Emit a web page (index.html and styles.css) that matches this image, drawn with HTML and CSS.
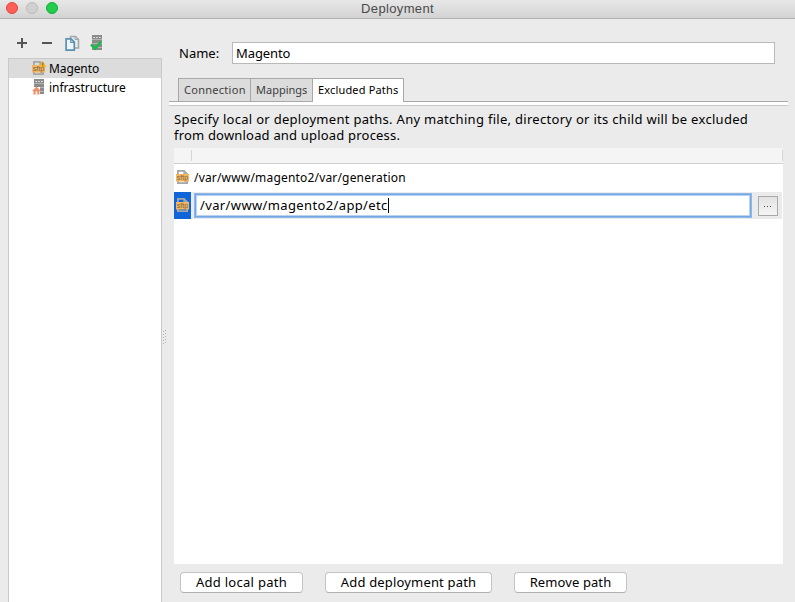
FILE: index.html
```html
<!DOCTYPE html>
<html lang="en">
<head>
<meta charset="utf-8">
<title>Deployment</title>
<link rel="stylesheet" href="styles.css">
</head>
<body>
<svg width="0" height="0" class="defs">
  <defs>
    <symbol id="sftp" viewBox="0 0 13 16" preserveAspectRatio="none">
      <path d="M1.9 5V1.9h6l3 3M1.9 12v2.2h9.2V12" fill="none" stroke="#a6a6a6" stroke-width="1.8"/>
      <path d="M8 1v3.9h4" fill="none" stroke="#a6a6a6" stroke-width="1.3"/>
      <rect x="0" y="5" width="13" height="7.5" fill="#f2b661"/>
      <text x="0.8" y="11" textLength="11.4" lengthAdjust="spacingAndGlyphs" class="glyph">sftp</text>
    </symbol>
    <symbol id="server" viewBox="0 0 12 16">
      <path d="M1 0h10v15H1z" fill="#8b8b8b"/>
      <path d="M1 4.5h10M1 8.5h10M1 12.5h10" stroke="#b4b4b4"/>
      <path d="M2.5 2.5h1.5M5.2 2.5h1.5M8 2.5h1.5" stroke="#eee"/>
    </symbol>
  </defs>
</svg>
<header class="titlebar">
  <div class="lights"><i class="light red"></i><i class="light gray"></i><i class="light green"></i></div>
  <h1><span>Deployment</span></h1>
</header>
<main class="window">
  <aside class="sidebar">
    <div class="tools">
      <svg width="12" height="12"><path d="M6 1v10M1 6h10" stroke="#555" stroke-width="2"/></svg>
      <svg width="12" height="12"><path d="M1 6h10" stroke="#555" stroke-width="2"/></svg>
      <svg class="copy" width="15" height="17" fill="none"><path d="M5.5 3V1.5h5l3 3V13H10" stroke="#a0a8ac" stroke-width="1.6"/><path d="M10 1.5v3h3" stroke="#a0a8ac"/><path d="M1.1 3.9h5l3.2 3.2v8H1.1z" fill="#edf5fa" stroke="#5a91b0" stroke-width="1.7"/><path d="M5.8 4v3.5h3.5" stroke="#5a91b0" stroke-width="1.2"/></svg>
      <svg class="test" width="14" height="16"><use href="#server" x="1" y="0" width="12" height="16"/><path d="M1 9.5l4.2 4.2L11 6.5" fill="none" stroke="#16bd48" stroke-width="2.5"/></svg>
    </div>
    <ul class="servers">
      <li class="selected"><svg width="15" height="16"><use href="#sftp" width="13" height="16"/><path d="M10.8.8l3.7 6.2H7.1z" fill="#f4b62c"/><path d="M10.8 2.5v2.5M10.8 5.6v.9" stroke="#7d5a20" stroke-width="1"/></svg><span>Magento</span></li>
      <li class="infra"><svg width="15" height="16"><use href="#server" x="1" y="0" width="12" height="16"/><path d="M0 8h8v8H0z" fill="#fff"/><path d="M4.5 7.5L0 12h1.4v3.5h6V12H9z" fill="#e9906b"/><path d="M3.6 12.5h1.7v3H3.6z" fill="#fff"/></svg><span>infrastructure</span></li>
    </ul>
  </aside>
  <div class="splitter"><svg width="5" height="16"><path d="M1 2.5h1M3 1.5h1M1 5.5h1M3 4.5h1M1 8.5h1M3 7.5h1M1 11.5h1M3 10.5h1M1 14.5h1M3 13.5h1" stroke="#b0b0b0"/></svg></div>
  <section class="content">
    <div class="name-row"><label><span>Name:</span></label><div class="input"><span>Magento</span></div></div>
    <nav class="tabs">
      <div class="tab connection"><span>Connection</span></div>
      <div class="tab mappings"><span>Mappings</span></div>
      <div class="tab active"><span>Excluded Paths</span></div>
    </nav>
    <div class="strip"></div>
    <p class="hint"><span class="first">Specify local or deployment paths. Any matching file, directory or its child will be excluded</span><span class="second">from download and upload process.</span></p>
    <div class="table">
      <div class="thead"><i></i><b></b></div>
      <div class="row plain"><div class="icon"><svg width="13" height="16"><use href="#sftp" width="13" height="16"/></svg></div><span>/var/www/magento2/var/generation</span></div>
      <div class="row editing"><div class="icon"><svg width="13" height="16"><use href="#sftp" width="13" height="16"/></svg></div><div class="edit"><span>/var/www/magento2/app/etc</span><i class="caret"></i></div><div class="browse"><svg width="10" height="2"><path d="M1 1.5h1M4 1.5h1M7 1.5h1" stroke="#444" stroke-width="1"/></svg></div></div>
    </div>
    <div class="actions">
      <div class="button local"><span>Add local path</span></div>
      <div class="button deploy"><span>Add deployment path</span></div>
      <div class="button remove"><span>Remove path</span></div>
    </div>
  </section>
</main>
</body>
</html>
```
FILE: styles.css
```css
* { box-sizing: border-box; }
body { margin: 0; width: 795px; height: 602px; overflow: hidden; background: #ebebeb; color: #000; font: 13px/16px "Noto Sans", "Open Sans", sans-serif; display: flex; flex-direction: column; }
span { white-space: nowrap; }
svg { flex: none; display: block; }
.defs { position: absolute; }
.glyph { font: 7.5px "Liberation Sans", sans-serif; fill: #7d6344; }
.titlebar { height: 19px; flex: none; display: flex; background: linear-gradient(#e8e8e8, #d3d3d3); border-bottom: 1px solid #b1b1b1; }
.lights { width: 180px; display: flex; gap: 8px; padding: 2px 0 0 6px; }
.light { width: 12px; height: 12px; border-radius: 50%; border: 1px solid; }
.red { background: #ff5f57; border-color: #e2443e; }
.gray { background: #d0d0d0; border-color: #bcbcbc; }
.green { background: #20cd4c; border-color: #14ae38; }
h1 { margin: 0 180px 0 0; flex: 1; text-align: center; font: 13px/17px "Liberation Sans", sans-serif; color: #4a4a4a; letter-spacing: .35px; }
.window { flex: 1; display: flex; min-height: 0; }
.sidebar { width: 154px; margin-left: 8px; display: flex; flex-direction: column; }
.tools { height: 39px; display: flex; align-items: center; padding: 9px 0 0 8px; gap: 13px; }
.copy { margin-left: -1px; }
.test { margin-left: -3px; }
.servers { list-style: none; margin: 0; padding: 0; flex: 1; background: #fff; border: 1px solid #c9c9c9; border-bottom: 0; font-size: 12px; }
.servers li { height: 19px; display: flex; align-items: center; gap: 2px; padding: 0 0 1px 23px; }
.servers span { padding-top: 2px; }
.servers .selected { background: #dcdcdc; letter-spacing: -.1px; }
.servers .infra { letter-spacing: -.06px; }
.splitter { width: 7px; display: flex; align-items: center; padding: 52px 0 0 0; }
.content { flex: 1; display: flex; flex-direction: column; min-width: 0; }
.name-row { margin: 23px 0 0 10px; display: flex; height: 22px; align-items: center; }
.name-row label { width: 53px; }
.input { width: 543px; height: 22px; background: #fff; border: 1px solid #b9b9b9; padding: 2px 0 0 3px; letter-spacing: -.1px; }
.tabs { display: flex; height: 23px; margin: 14px 0 0 9px; font-size: 11px; position: relative; color: #3c3c3c; }
.tab { height: 23px; background: #dcdcdc; border: 1px solid #a8a8a8; border-width: 1px 0 0 1px; padding: 3px 0 0 5px; }
.connection { width: 72px; letter-spacing: .28px; }
.mappings { width: 62px; }
.active { width: 92px; height: 24px; background: #fff; border-right-width: 1px; color: #000; letter-spacing: .16px; }
.strip { height: 5px; width: 619px; background: #fff; border-top: 1px solid #a8a8a8; border-bottom: 1px solid #c8c8c8; }
.hint { margin: 5px 0 0 5px; height: 37px; }
.hint span { display: block; }
.first { letter-spacing: .294px; }
.second { letter-spacing: .19px; }
.table { width: 609px; height: 416px; margin-left: 5px; background: #fff; }
.thead { height: 16px; background: #f5f5f5; border-bottom: 1px solid #d0d0d0; display: flex; justify-content: space-between; padding: 2px 0 2px 17px; }
.thead i, .thead b { width: 1px; background: #d5d5d5; }
.row { height: 28px; display: flex; align-items: center; }
.plain { font-size: 12px; letter-spacing: .18px; }
.plain > span { padding-bottom: 1px; }
.icon { width: 17px; height: 27px; padding: 5px 0 0 2px; margin-right: 3px; }
.plain .icon { padding-top: 4px; }
.editing { height: 27px; width: 608px; background: #ebebeb; }
.editing .icon { background: #1065d9; }
.edit { width: 556px; height: 23px; margin-left: 1px; background: #fff; border: 1px solid #74a7e6; box-shadow: 0 0 0 1px #8db8ec, inset 0 0 0 1px #b9d2f0; display: flex; align-items: center; padding: 0 0 1px 4px; letter-spacing: .37px; }
.caret { width: 1px; height: 15px; background: #000; }
.browse { width: 20px; height: 20px; margin-left: 7px; border: 1px solid #a9a9a9; background: linear-gradient(#e3e3e3, #f5f5f5); display: flex; align-items: center; justify-content: center; }
.actions { display: flex; gap: 22px; margin: 8px 0 0 11px; }
.button { height: 21px; background: #fff; border: 1px solid #c4c4c4; border-bottom-color: #b0b0b0; border-radius: 4px; text-align: center; line-height: 19px; }
.local { width: 123px; letter-spacing: .28px; }
.deploy { width: 167px; letter-spacing: .17px; }
.remove { width: 113px; letter-spacing: .1px; }
```
